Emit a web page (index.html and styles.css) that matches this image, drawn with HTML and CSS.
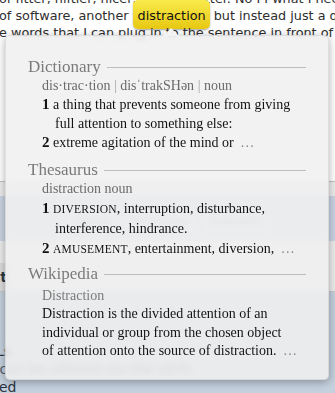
FILE: index.html
```html
<!DOCTYPE html>
<html>
<head>
<meta charset="utf-8">
<link rel="stylesheet" href="styles.css">
</head>
<body>
<div class="page">
  <div class="para">
    <div class="line">of fitter, niftier, nicer, or play better. No I I what I need</div>
    <div class="line">of software, another <span class="hl">distraction</span> but instead just a quick</div>
    <div class="line">e words that I can plug in to the sentence in front of</div>
  </div>
  <div class="panel">
    <div class="panel-top"></div>
    <div class="panel-buttons">
      <span class="btn">Save</span><span class="btn">Preview</span><span class="btn">Submit</span>
    </div>
    <div class="panel-foot"><span class="tab">Post</span></div>
  </div>
  <div class="lower">
    <div class="opt">Ls</div>
    <div class="opt">(can be altered via the UCP)</div>
    <div class="opt">ed</div>
  </div>
</div>

<div class="popover">
  <div class="arrow"></div>
  <section class="sect">
    <h2 class="sect-head">Dictionary</h2>
    <div class="sect-body">
      <div class="sub">dis·trac·tion <span class="bar">|</span> disˈtrakSHən <span class="bar">|</span> noun</div>
      <div class="entry"><b>1</b> a thing that prevents someone from giving full attention to something else:</div>
      <div class="entry"><b>2</b> extreme agitation of the mind or <span class="more">…</span></div>
    </div>
  </section>
  <section class="sect thes">
    <h2 class="sect-head">Thesaurus</h2>
    <div class="sect-body">
      <div class="sub">distraction noun</div>
      <div class="entry"><b>1</b> <span class="sc">DIVERSION</span>, interruption, disturbance, interference, hindrance.</div>
      <div class="entry"><b>2</b> <span class="sc">AMUSEMENT</span>, entertainment, diversion, <span class="more">…</span></div>
    </div>
  </section>
  <section class="sect wiki">
    <h2 class="sect-head">Wikipedia</h2>
    <div class="sect-body wiki-body">
      <div class="sub wtitle">Distraction</div>
      <div class="wtext">Distraction is the divided attention of an individual or group from the chosen object <span class="keep">of attention onto the source of distraction. <span class="more">…</span></span></div>
    </div>
  </section>
</div>
</body>
</html>
```

FILE: styles.css
```css
html, body {
  margin: 0;
  padding: 0;
}
body {
  width: 335px;
  height: 393px;
  overflow: hidden;
  background: #ffffff;
  position: relative;
  font-family: "DejaVu Sans", Verdana, sans-serif;
}
.page {
  display: flex;
  flex-direction: column;
}
.para {
  margin-top: -10px;
  font-size: 12.8px;
  line-height: 17px;
  color: #2e2e2e;
  white-space: nowrap;
  margin-left: -1px;
}
.hl {
  background: linear-gradient(#f9ea4c, #e7c812);
  border-radius: 5px;
  padding: 8px 4px 6px 5px;
  color: #111;
  box-shadow: 0 1px 2px rgba(0,0,0,0.35);
}
.panel {
  margin-top: 140px;
  border-top: 1px solid #c4c4c4;
  display: flex;
  flex-direction: column;
}
.panel-top {
  height: 14px;
  background: #ececec;
}
.panel-buttons {
  height: 45px;
  background: #cbd3e3;
  display: flex;
  gap: 6px;
  padding: 12px 0 0 68px;
  box-sizing: border-box;
}
.btn {
  height: 24px;
  padding: 0 6px;
  border: 1px solid #c0c7d2;
  background: #d9dfe8;
  font: bold 13px "DejaVu Sans", sans-serif;
  color: #a0a6b2;
  line-height: 24px;
}
.panel-foot {
  height: 50px;
  background: #ececec;
  display: flex;
  align-items: flex-end;
  border-bottom: 1px solid #c8c8c8;
}
.tab {
  height: 28px;
  margin-left: -32px;
  padding: 0 4px;
  background: #dcdcdc;
  font: bold 14px "DejaVu Sans", sans-serif;
  color: #2a3a44;
  line-height: 28px;
}
.lower {
  background: #c4d0dd;
  height: 120px;
  padding-top: 50px;
  box-sizing: border-box;
  font-size: 14px;
  color: #2c3440;
}
.opt {
  line-height: 18px;
  margin-left: -4px;
}
.opt:nth-child(2) {
  margin-left: -6px;
  color: #55606c;
}
.opt:nth-child(3) {
  margin-left: -1px;
}

/* popover */
.popover {
  position: absolute;
  left: 5px;
  top: 35px;
  width: 324px;
  height: 345px;
  box-sizing: border-box;
  padding: 22px 22px 0 22px;
  background: rgba(240, 240, 240, 0.85);
  -webkit-backdrop-filter: blur(3px);
  backdrop-filter: blur(3px);
  border-radius: 5px;
  border: 1px solid rgba(0,0,0,0.08);
  box-shadow: 0 2px 9px rgba(0,0,0,0.32);
  font-family: "Liberation Serif", "Times New Roman", serif;
  color: #121212;
}
.arrow {
  position: absolute;
  top: -8px;
  left: 157px;
  width: 16px;
  height: 8px;
  background: rgba(246, 246, 246, 0.95);
  clip-path: polygon(50% 0, 100% 100%, 0 100%);
}
.sect-head {
  margin: 0;
  display: flex;
  align-items: center;
  gap: 6px;
  font-size: 17px;
  font-weight: normal;
  line-height: 18px;
  color: #7b7b7b;
}
.sect-head::after {
  content: "";
  flex: 1;
  height: 1px;
  background: #bdbdbd;
  margin-top: 1px;
}
.sect-body {
  margin-left: 14px;
  margin-right: 8px;
  font-size: 14px;
  line-height: 19px;
}
.wiki-body {
  margin-right: 22px;
}
.keep {
  white-space: nowrap;
}
.sub {
  color: #6b6b6b;
}
.bar {
  color: #a5a5a5;
}
.entry {
  padding-left: 13px;
  text-indent: -13px;
}
.entry b {
  font-size: 15px;
}
.sc {
  font-size: 11.5px;
  letter-spacing: 0.2px;
}
.more {
  color: #8a8a8a;
  margin-left: 3px;
}
.thes {
  margin-top: 9px;
}
.thes .entry {
  margin-top: 1px;
}
.wiki {
  margin-top: 6px;
}
.wtitle {
  margin-top: 3px;
  color: #7a7a7a;
}
.wtext {
  line-height: 18.5px;
}
```
